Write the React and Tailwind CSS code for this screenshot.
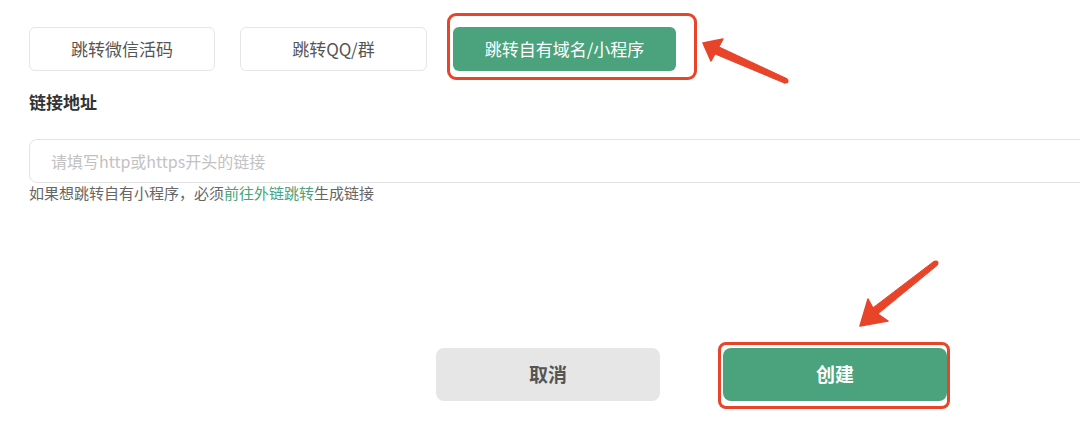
import React from 'react';

const FONT = { fontFamily: '"Noto Sans CJK SC", "Noto Sans", sans-serif' };

const JUMP_TYPES = [
  { label: '跳转微信活码', width: 'w-[186px]' },
  { label: '跳转QQ/群', width: 'w-[187px]' },
  { label: '跳转自有域名/小程序', width: 'w-[223px]', active: true },
];

/* ── Annotation layer: red highlight boxes + arrows drawn over the form ── */
const Annotations = () => (
  <>
    <div className="absolute left-[447px] top-[13px] w-[250px] h-[67px] rounded-[9px] border-[3px] border-[#e8442a]" />
    <div className="absolute left-[718px] top-[342px] w-[232px] h-[67px] rounded-[8px] border-[3px] border-[#e8442a]" />
    <svg className="absolute inset-0 pointer-events-none" width="1080" height="428" viewBox="0 0 1080 428">
      <g fill="#e8442a" stroke="#e8442a" strokeLinejoin="round">
        <polygon points="714.4,53.7 717.6,46.3 787,78.7 785,83.3" strokeWidth="1" />
        <circle cx="786" cy="81" r="2.5" stroke="none" />
        <polygon points="703,43 723,39 717,50 711,61" strokeWidth="1.5" />
        <polygon points="876.5,315.1 871.5,308.9 934.4,261 937.6,265" strokeWidth="1" />
        <circle cx="936" cy="263" r="2.5" stroke="none" />
        <polygon points="860,326 868,299 875,312 888,321" strokeWidth="1.5" />
      </g>
    </svg>
  </>
);

const App = () => (
  <div className="relative w-[1080px] h-[428px] overflow-hidden bg-white" style={FONT}>
    <div className="flex flex-col pl-[29px] pt-[27px]">

      {/* ── Jump type selector ── */}
      <div className="flex gap-[25px]">
        {JUMP_TYPES.map((t, i) => (
          <button
            key={t.label}
            className={`${t.width} h-[44px] rounded-[6px] text-[17px] flex items-center justify-center ${
              t.active ? 'bg-[#4aa37c] text-white' : 'bg-white text-[#555] border border-[#e6e6e6]'
            } ${i === 2 ? 'ml-[1px]' : ''}`}
          >
            {t.label}
          </button>
        ))}
      </div>

      {/* ── Link field ── */}
      <div className="mt-[19px] text-[17px] leading-6 font-bold text-[#333]">链接地址</div>
      <div className="mt-[25px] w-[1080px] h-[44px] rounded-[8px] border border-[#e3e3e3] flex items-center pl-[21px] text-[16px] text-[#c2c2c2]">
        请填写http或https开头的链接
      </div>
      <p className="text-[15px] leading-5 text-[#666]">
        如果想跳转自有小程序，必须<span className="text-[#4aa37c]">前往外链跳转</span>生成链接
      </p>

      {/* ── Actions ── */}
      <div className="mt-[145px] flex gap-[63px] pl-[407px]">
        <button className="w-[224px] h-[53px] rounded-[8px] bg-[#e6e6e6] text-[#555] text-[19px] font-semibold">取消</button>
        <button className="w-[224px] h-[53px] rounded-[8px] bg-[#4aa37c] text-white text-[19px] font-semibold">创建</button>
      </div>
    </div>

    <Annotations />
  </div>
);

export default App;
